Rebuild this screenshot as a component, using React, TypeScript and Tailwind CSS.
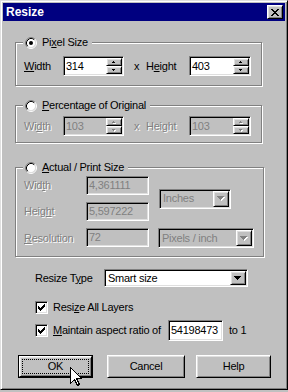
import React from "react";

const sunken =
  "border border-t-[#808080] border-l-[#808080] border-b-white border-r-white shadow-[inset_1px_1px_0_#000,inset_-1px_-1px_0_#dfdfdf]";
const raised =
  "border border-t-white border-l-white border-b-black border-r-black shadow-[inset_1px_1px_0_#dfdfdf,inset_-1px_-1px_0_#808080]";
const dis = "text-[#808080] [text-shadow:1px_1px_0_#fff]";

function Radio({ checked }: { checked?: boolean }) {
  return (
    <svg width="12" height="12" viewBox="0 0 12 12" className="shrink-0">
      <circle cx="6" cy="6" r="4.5" fill="#fff" />
      <path d="M2.11 9.89A5.5 5.5 0 0 1 9.89 2.11" stroke="#808080" fill="none" />
      <path d="M9.89 2.11A5.5 5.5 0 0 1 2.11 9.89" stroke="#fff" fill="none" />
      <path d="M2.82 9.18A4.5 4.5 0 0 1 9.18 2.82" stroke="#000" fill="none" />
      <path d="M9.18 2.82A4.5 4.5 0 0 1 2.82 9.18" stroke="#dfdfdf" fill="none" />
      {checked && <circle cx="6" cy="6" r="2" fill="#000" />}
    </svg>
  );
}

const CHECK = ["......#", ".....##", "#...###", "##.###.", "#####..", ".###...", "..#...."];
const XMARK = ["##....##", ".##..##.", "..####..", "...##...", "..####..", ".##..##.", "##....##"];

function Pixels({ rows, color }: { rows: string[]; color: string }) {
  return (
    <svg width={rows[0].length} height={rows.length} shapeRendering="crispEdges">
      {rows.flatMap((row, y) =>
        [...row].map((c, x) =>
          c === "#" ? <rect key={`${x}-${y}`} x={x} y={y} width="1" height="1" fill={color} /> : null
        )
      )}
    </svg>
  );
}

function Checkbox() {
  return (
    <div className={`w-[13px] h-[13px] bg-white ${sunken} shrink-0 flex items-center justify-center`}>
      <Pixels rows={CHECK} color="#000" />
    </div>
  );
}

function Arrow({ dir, disabled }: { dir: "up" | "down"; disabled?: boolean }) {
  const d = dir === "up" ? "M1 0h1v1h1v1H0V1h1z" : "M0 0h3v1H2v1H1V1H0z";
  return (
    <svg width="4" height="3" shapeRendering="crispEdges">
      {disabled && <path d={d} fill="#fff" transform="translate(1 1)" />}
      <path d={d} fill={disabled ? "#808080" : "#000"} />
    </svg>
  );
}

function DropArrow({ disabled }: { disabled?: boolean }) {
  const d = "M0 0h7v1h-1v1h-1v1h-1v1h-1v-1h-1v-1h-1v-1h-1z";
  return (
    <svg width="8" height="5" shapeRendering="crispEdges">
      {disabled && <path d={d} fill="#fff" transform="translate(1 1)" />}
      <path d={d} fill={disabled ? "#808080" : "#000"} />
    </svg>
  );
}

function SpinInput({ value, disabled, className }: { value: string; disabled?: boolean; className: string }) {
  return (
    <div className={`${className} h-[20px] ${sunken} ${disabled ? "bg-[#c0c0c0]" : "bg-white"} flex p-[1px] shrink-0`}>
      <span className={`flex-1 pl-[1px] leading-[16px] ${disabled ? "text-[#808080]" : ""}`}>{value}</span>
      <div className="flex flex-col w-[16px] h-[16px]">
        <div className={`h-[8px] bg-[#c0c0c0] ${raised} flex items-center justify-center`}>
          <Arrow dir="up" disabled={disabled} />
        </div>
        <div className={`h-[8px] bg-[#c0c0c0] ${raised} flex items-center justify-center`}>
          <Arrow dir="down" disabled={disabled} />
        </div>
      </div>
    </div>
  );
}

function TextBox({ value, disabled, className }: { value: string; disabled?: boolean; className: string }) {
  return (
    <div className={`${className} ${sunken} ${disabled ? "bg-[#c0c0c0] text-[#808080]" : "bg-white"} flex items-center p-[1px] shrink-0`}>
      <span className="pl-[1px]">{value}</span>
    </div>
  );
}

function Select({ value, disabled, className }: { value: string; disabled?: boolean; className: string }) {
  return (
    <div className={`${className} ${sunken} ${disabled ? "bg-[#c0c0c0] text-[#808080]" : "bg-white"} flex p-[1px] shrink-0`}>
      <span className="flex-1 pl-[2px] flex items-center">{value}</span>
      <div className={`w-[16px] h-full bg-[#c0c0c0] ${raised} flex items-center justify-center`}>
        <DropArrow disabled={disabled} />
      </div>
    </div>
  );
}

function Group({
  legend,
  checked,
  className,
  children,
}: {
  legend: React.ReactNode;
  checked?: boolean;
  className: string;
  children: React.ReactNode;
}) {
  return (
    <fieldset
      className={`${className} ml-[12px] w-[247px] border border-[#808080] shadow-[1px_1px_0_#fff,inset_1px_1px_0_#fff] pl-[7px] pr-[9px]`}
    >
      <legend className="bg-[#c0c0c0] pl-[2px] pr-[4px]">
        <div className="flex items-center gap-[5px] h-[13px]">
          <Radio checked={checked} />
          <span>{legend}</span>
        </div>
      </legend>
      {children}
    </fieldset>
  );
}

function Button({ children, className }: { children: React.ReactNode; className: string }) {
  return (
    <div className={`${className} h-[23px] bg-[#c0c0c0] ${raised} flex items-center justify-center`}>
      {children}
    </div>
  );
}

export default function App() {
  return (
    <div className="w-[288px] h-[392px] bg-[#c0c0c0] font-['Liberation_Sans',Arial,sans-serif] text-[11px] leading-[13px] tracking-[-0.25px] text-black select-none">
      <div className="relative w-[288px] h-[390px] bg-[#c0c0c0] border border-t-[#dfdfdf] border-l-[#dfdfdf] border-r-black border-b-black shadow-[inset_1px_1px_0_#fff,inset_-1px_-1px_0_#808080] p-[2px] flex flex-col">
        {/* Title bar */}
        <div className="h-[18px] bg-[#000080] flex items-center justify-between pl-[3px] pr-[2px] shrink-0">
          <span className="text-white font-bold text-[12px] tracking-normal">Resize</span>
          <div className={`w-[16px] h-[14px] bg-[#c0c0c0] ${raised} flex items-center justify-center`}>
            <Pixels rows={XMARK} color="#000" />
          </div>
        </div>

        {/* Pixel Size */}
        <Group
          className="mt-[15px]"
          checked
          legend={
            <>
              Pi<u>x</u>el Size
            </>
          }
        >
          <div className="flex items-center pt-[7px] pb-[9px]">
            <span className="w-[40px] pl-[1px]">
              <u>W</u>idth
            </span>
            <SpinInput value="314" className="w-[61px]" />
            <span className="w-[22px] pl-[10px]">x</span>
            <span className="w-[43px]">
              H<u>e</u>ight
            </span>
            <SpinInput value="403" className="w-[62px]" />
          </div>
        </Group>

        {/* Percentage of Original */}
        <Group
          className="mt-[13px]"
          legend={
            <>
              <u>P</u>ercentage of Original
            </>
          }
        >
          <div className="flex items-center pt-[4px] pb-[6px]">
            <span className={`w-[40px] pl-[1px] ${dis}`}>
              Wi<u>d</u>th
            </span>
            <SpinInput value="103" disabled className="w-[61px]" />
            <span className={`w-[22px] pl-[10px] ${dis}`}>x</span>
            <span className={`w-[43px] ${dis}`}>
              Hei<u>g</u>ht
            </span>
            <SpinInput value="103" disabled className="w-[62px]" />
          </div>
        </Group>

        {/* Actual / Print Size */}
        <Group
          className="mt-[18px]"
          legend={
            <>
              <u>A</u>ctual / Print Size
            </>
          }
        >
          <div className="grid grid-cols-[63px_63px_1fr] grid-rows-[19px_19px_20px] gap-y-[7px] pt-[2px] pb-[8px]">
            <span className={`col-start-1 row-start-1 self-center pl-[1px] ${dis}`}>
              Wid<u>t</u>h
            </span>
            <TextBox value="4,361111" disabled className="col-start-2 row-start-1 h-[19px]" />
            <span className={`col-start-1 row-start-2 self-center pl-[1px] ${dis}`}>
              Heig<u>h</u>t
            </span>
            <TextBox value="5,597222" disabled className="col-start-2 row-start-2 h-[19px]" />
            <span className={`col-start-1 row-start-3 self-center pl-[1px] ${dis}`}>
              <u>R</u>esolution
            </span>
            <TextBox value="72" disabled className="col-start-2 row-start-3 h-[19px]" />
            <div className="col-start-3 row-start-1 row-span-2 self-center pl-[10px]">
              <Select value="Inches" disabled className="w-[72px] h-[20px]" />
            </div>
            <div className="col-start-3 row-start-3 self-start pl-[9px]">
              <Select value="Pixels / inch" disabled className="w-[96px] h-[20px]" />
            </div>
          </div>
        </Group>

        {/* Resize type */}
        <div className="flex items-center mt-[12px] pl-[32px]">
          <span className="w-[69px]">
            Resize T<u>y</u>pe
          </span>
          <Select value="Smart size" className="w-[144px] h-[18px]" />
        </div>

        <div className="flex items-center gap-[5px] mt-[14px] pl-[32px] h-[13px]">
          <Checkbox />
          <span>
            Resi<u>z</u>e All Layers
          </span>
        </div>

        <div className="flex items-center mt-[6px] pl-[32px] h-[21px]">
          <Checkbox />
          <span className="w-[120px] pl-[5px]">
            <u>M</u>aintain aspect ratio of
          </span>
          <TextBox value="54198473" className="w-[55px] h-[21px]" />
          <span className="ml-[6px]">to 1</span>
        </div>

        {/* Buttons */}
        <div className="flex items-center mt-[14px] pl-[15px]">
          <div className="w-[75px] h-[23px] border border-black">
            <div className={`w-full h-full bg-[#c0c0c0] ${raised} p-[2px]`}>
              <div className="w-full h-full border border-dotted border-black flex items-center justify-center">
                OK
              </div>
            </div>
          </div>
          <Button className="ml-[14px] w-[78px]">Cancel</Button>
          <Button className="ml-[11px] w-[75px]">Help</Button>
        </div>

        {/* Mouse cursor */}
        <svg width="13" height="21" className="absolute left-[68px] top-[365px]" shapeRendering="crispEdges">
          <path
            d="M1.5 1.5V17.5L5.5 13.5L8.5 19.5L10.5 18.5L7.5 12.5H12.5Z"
            fill="#fff"
            stroke="#000"
            strokeWidth="1"
            strokeLinejoin="miter"
          />
        </svg>
      </div>
    </div>
  );
}
